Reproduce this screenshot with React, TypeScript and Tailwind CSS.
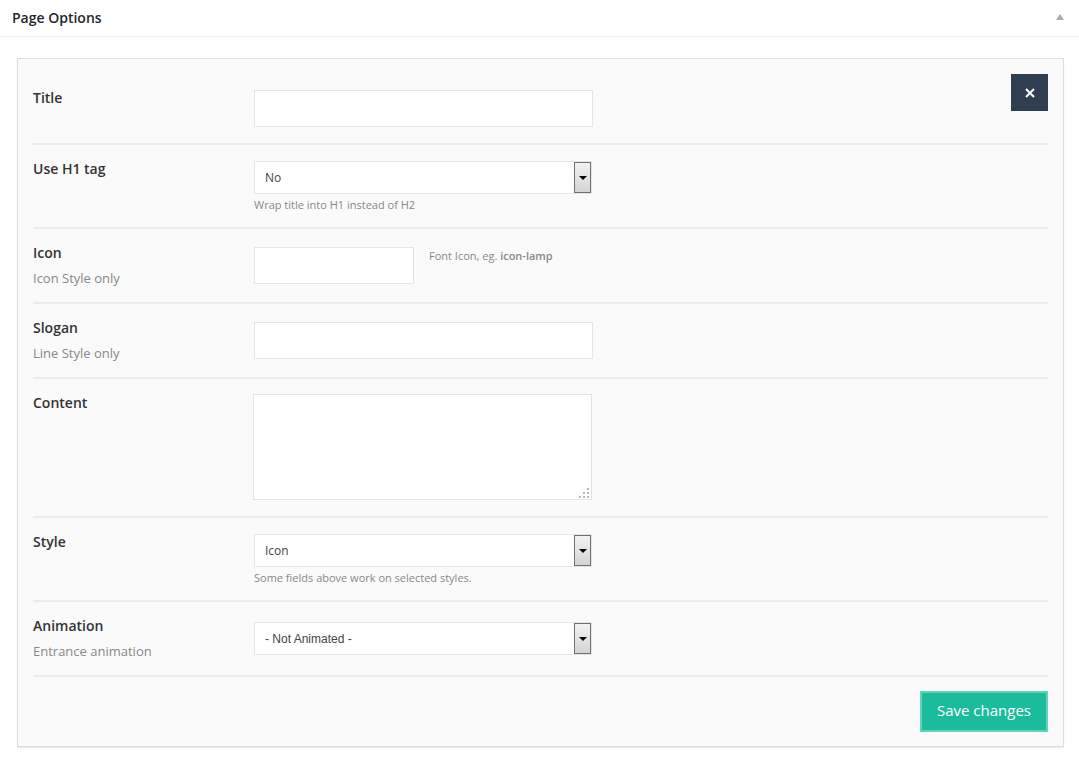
import type { ReactNode } from 'react';

const FONT = { fontFamily: '"Open Sans", "Liberation Sans", sans-serif' };

const Row = ({
  label,
  sub,
  children,
}: {
  label: string;
  sub?: string;
  children: ReactNode;
}) => (
  <div className="flex border-b-2 border-[#ebebeb] py-4">
    <div className="w-[221px] shrink-0">
      <p className="text-[14px] font-semibold leading-[16px] text-[#333]">{label}</p>
      {sub && <p className="mt-[9px] text-[13px] leading-[16px] text-[#888]">{sub}</p>}
    </div>
    <div className={sub ? 'flex-1 pt-[2px]' : 'flex-1'}>{children}</div>
  </div>
);

const TextInput = ({ width = 'w-[339px]' }: { width?: string }) => (
  <div className={`h-[37px] border border-[#e5e5e5] bg-white ${width}`} />
);

const Select = ({ value, arial }: { value: string; arial?: boolean }) => (
  <div className="flex h-[33px] w-[338px] items-center justify-between border border-[#e5e5e5] bg-white">
    <span
      className="pl-[10px] text-[12px] text-[#444]"
      style={arial ? { fontFamily: '"Liberation Sans", Arial, sans-serif' } : undefined}
    >
      {value}
    </span>
    <span className="flex h-[31px] w-[17px] items-center justify-center border border-[#707070] bg-gradient-to-b from-[#f2f2f2] to-[#d4d4d4]">
      <span className="h-0 w-0 border-x-[4px] border-t-[4px] border-x-transparent border-t-black" />
    </span>
  </div>
);

const Help = ({ children }: { children: ReactNode }) => (
  <p className="mt-[4px] text-[11px] leading-[13px] text-[#888]">{children}</p>
);

export default function App() {
  return (
    <div className="min-h-screen bg-white" style={FONT}>
      <div className="flex h-[37px] items-center justify-between border-b border-[#eeeeee] pb-[2px] pl-3 pr-[15px]">
        <h2 className="text-[14px] font-semibold text-[#23282d]">Page Options</h2>
        <span className="h-0 w-0 border-x-[4px] border-b-[6px] border-x-transparent border-b-[#aaaaaa]" />
      </div>

      <div className="relative ml-[17px] mr-[15px] mt-[21px] border border-[#dddddd] bg-[#fafafa] px-[15px] pb-[14px] pt-[15px] shadow-[0_1px_1px_rgba(0,0,0,0.08)]">
        <button
          type="button"
          className="absolute right-[15px] top-[15px] flex h-[37px] w-[37px] items-center justify-center bg-[#2f3e50] text-white"
        >
          <svg width="10" height="10" viewBox="0 0 10 10">
            <path d="M1 1L9 9M9 1L1 9" stroke="white" strokeWidth="2" />
          </svg>
        </button>

        <Row label="Title">
          <TextInput />
        </Row>

        <Row label="Use H1 tag">
          <Select value="No" />
          <Help>Wrap title into H1 instead of H2</Help>
        </Row>

        <Row label="Icon" sub="Icon Style only">
          <div className="flex items-start">
            <TextInput width="w-[160px]" />
            <p className="ml-[15px] mt-[1px] text-[11px] text-[#888]">
              Font Icon, eg. <b className="font-semibold">icon-lamp</b>
            </p>
          </div>
        </Row>

        <Row label="Slogan" sub="Line Style only">
          <TextInput />
        </Row>

        <Row label="Content">
          <div className="relative -ml-px -mt-px h-[106px] w-[339px] border border-[#e5e5e5] bg-white">
            <svg className="absolute bottom-[1px] right-[2px]" width="10" height="10" viewBox="0 0 10 10">
              <rect x="8" y="0" width="2" height="2" fill="#bbb" />
              <rect x="4" y="4" width="2" height="2" fill="#bbb" />
              <rect x="8" y="4" width="2" height="2" fill="#bbb" />
              <rect x="0" y="8" width="2" height="2" fill="#bbb" />
              <rect x="4" y="8" width="2" height="2" fill="#bbb" />
              <rect x="8" y="8" width="2" height="2" fill="#bbb" />
            </svg>
          </div>
        </Row>

        <Row label="Style">
          <Select value="Icon" />
          <Help>Some fields above work on selected styles.</Help>
        </Row>

        <Row label="Animation" sub="Entrance animation">
          <div className="pt-[2px]">
            <Select value="- Not Animated -" arial />
          </div>
        </Row>

        <div className="flex justify-end pt-[14px]">
          <button
            type="button"
            className="h-[41px] w-[128px] border-2 border-[#5fd4b6] bg-[#1abc9c] pb-[3px] text-[15px] text-white"
          >
            Save changes
          </button>
        </div>
      </div>
    </div>
  );
}
